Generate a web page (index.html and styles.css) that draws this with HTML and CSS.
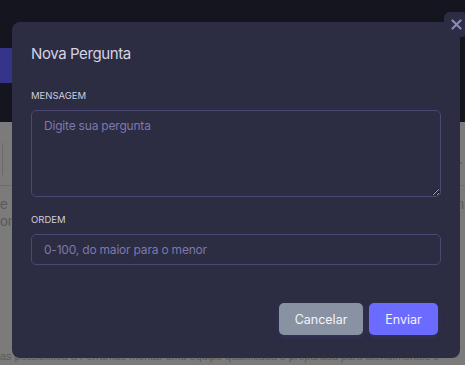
FILE: index.html
```html
<!DOCTYPE html>
<html>
<head>
    <title>Nova Pergunta</title>
    <link rel="stylesheet" href="styles.css">
</head>
<body>
    <div class="page">
        <div class="page-header">
            <div class="header-btn"></div>
        </div>
        <div class="page-body">
            <div class="toolbar">
                <div class="toolbar-box"></div>
                <span class="toolbar-dots">...</span>
            </div>
            <p class="page-text top">e a <span class="page-right">n</span></p>
            <p class="page-text">on</p>
            <p class="page-text bottom">as possibilitou a Ferramac montar uma equipe qualificada e preparada para atendimentos e</p>
        </div>
    </div>

    <div class="overlay">
        <div class="modal">
            <button class="modal-close" aria-label="Fechar">
                <svg width="11" height="11" viewBox="0 0 11 11">
                    <path d="M1.5 1.5 L9.5 9.5 M9.5 1.5 L1.5 9.5" stroke="currentColor" stroke-width="2.2" stroke-linecap="round"/>
                </svg>
            </button>
            <h2 class="modal-title">Nova Pergunta</h2>
            <div class="field">
                <label class="field-label">MENSAGEM</label>
                <textarea class="field-input area" placeholder="Digite sua pergunta"></textarea>
            </div>
            <div class="field">
                <label class="field-label">ORDEM</label>
                <input class="field-input" type="text" placeholder="0-100, do maior para o menor">
            </div>
            <div class="modal-actions">
                <button class="btn btn-cancel">Cancelar</button>
                <button class="btn btn-send">Enviar</button>
            </div>
        </div>
    </div>
</body>
</html>
```

FILE: styles.css
```css
* {
    box-sizing: border-box;
}

body {
    margin: 0;
    width: 465px;
    height: 365px;
    overflow: hidden;
    font-family: Inter, "Noto Sans", sans-serif;
    background: #7b7b7b;
}

/* Dimmed page behind the modal */
.page-header {
    height: 122px;
    background: #15151f;
    padding-top: 48px;
}

.header-btn {
    width: 40px;
    height: 35px;
    background: #34348a;
}

.page-body {
    color: #5a5a5a;
    font-family: "Liberation Sans", Arial, sans-serif;
    font-size: 14px;
}

.toolbar {
    height: 64px;
    border-bottom: 1px solid #6e6e6e;
    display: flex;
    justify-content: space-between;
    align-items: center;
    padding-top: 10px;
}

.toolbar-box {
    width: 3px;
    height: 32px;
    border-right: 1px solid #6a6a6a;
}

.toolbar-dots {
    padding-right: 2px;
}

.page-text {
    margin: 0;
    line-height: 17px;
    display: flex;
    justify-content: space-between;
}

.page-text.top {
    margin-top: 10px;
}

.page-right {
    padding-right: 1px;
}

.page-text.bottom {
    margin-top: 119px;
    line-height: 14px;
    white-space: nowrap;
    font-size: 10.8px;
}

/* Modal */
.overlay {
    position: absolute;
    top: 0;
    left: 0;
    width: 465px;
    height: 365px;
}

.modal {
    position: absolute;
    top: 22px;
    left: 12px;
    width: 448px;
    height: 336px;
    background: #2c2c42;
    border-radius: 8px;
    padding: 23px 19px 0 19px;
    display: flex;
    flex-direction: column;
}

.modal-close {
    position: absolute;
    top: -10px;
    right: -8px;
    width: 24px;
    height: 25px;
    border: none;
    border-radius: 6px;
    background: #2c2c42;
    color: #8888bf;
    display: flex;
    align-items: center;
    justify-content: center;
    padding: 0;
}

.modal-title {
    margin: 0;
    font-size: 15px;
    font-weight: 400;
    letter-spacing: -0.4px;
    color: #d4d4e2;
    line-height: 18px;
}

.field {
    display: flex;
    flex-direction: column;
    margin-top: 27px;
}

.field + .field {
    margin-top: 17px;
}

.field-label {
    font-size: 9.5px;
    color: #cfcfdd;
    line-height: 12px;
    margin-bottom: 8px;
}

.field-input {
    width: 410px;
    height: 31px;
    background: #2c2c42;
    border: 1px solid #4a4872;
    border-radius: 5px;
    padding: 0 12px;
    font-family: Inter, "Noto Sans", sans-serif;
    font-size: 12px;
    letter-spacing: -0.2px;
    color: #d4d4e2;
    outline: none;
}

.field-input.area {
    height: 87px;
    padding-top: 7px;
    resize: vertical;
}

.field-input::placeholder {
    color: #7c79b0;
}

.modal-actions {
    display: flex;
    justify-content: flex-end;
    gap: 6px;
    margin-top: 38px;
    padding-right: 3px;
}

.btn {
    height: 32px;
    border: none;
    border-radius: 5px;
    font-family: Inter, "Noto Sans", sans-serif;
    font-size: 12.5px;
    color: #f4f4fa;
    box-shadow: 0 2px 6px rgba(100, 100, 255, 0.15);
}

.btn-cancel {
    width: 84px;
    background: #8892a3;
}

.btn-send {
    width: 69px;
    background: #6b6bff;
}
```
